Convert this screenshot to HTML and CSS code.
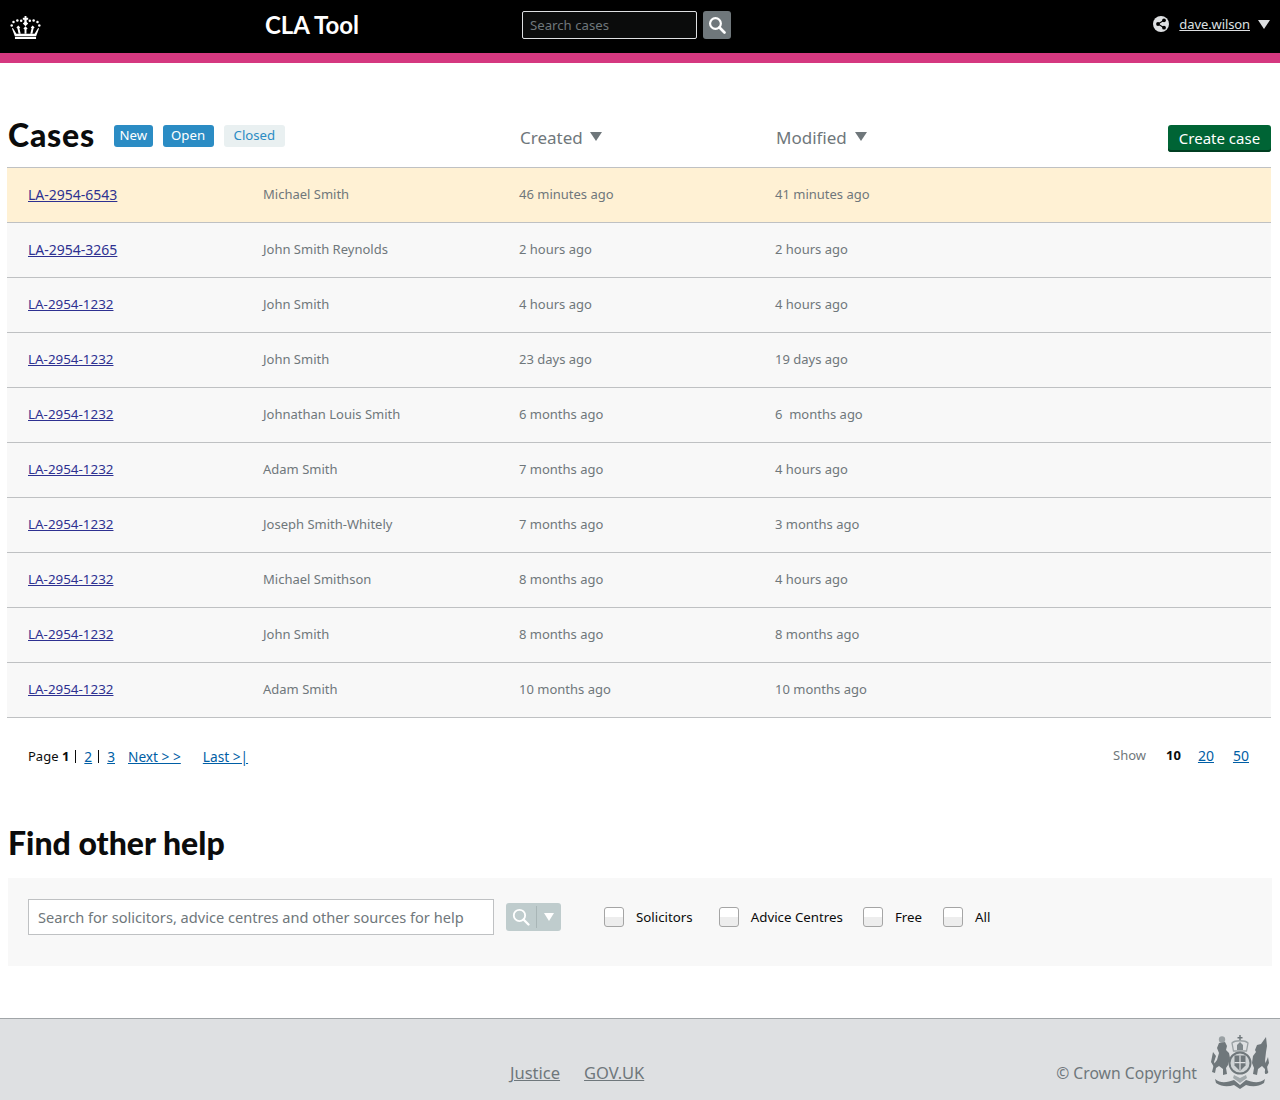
FILE: index.html
```html
<!DOCTYPE html>
<html lang="en">
<head>
<meta charset="utf-8">
<title>CLA Tool</title>
<link rel="stylesheet" href="styles.css">
</head>
<body>
<header class="topbar">
  <svg class="crown" viewBox="0 0 32 24" width="31" height="23" aria-hidden="true"><g fill="#fff"><circle cx="1.600" cy="10" r="1.300"/><circle cx="3.500" cy="6.200" r="1.300"/><circle cx="7.500" cy="4.800" r="1.300"/><circle cx="11.500" cy="5" r="1.300"/><circle cx="20.500" cy="5" r="1.300"/><circle cx="24.500" cy="4.800" r="1.300"/><circle cx="28.500" cy="6.200" r="1.300"/><circle cx="30.400" cy="10" r="1.300"/><path d="M15 0h2v1.800h1.800v2.200H17.200v2.300l1.600 1.500L16 10.600l-2.800-2.800 1.600-1.500V4H13.200V1.800H15z"/><path d="M16 10.800l2.200 2.200-1.200 1v4.500h-2V14l-1.200-1zM8.500 10l2 2-.9.8 1.400 5.700H8.800L7.600 13l-1.100-1zM23.500 10l2 2-1.100 1-1.200 5.500H21l1.400-5.700-.9-.8z"/><path d="M2.800 12.500l3.700 6h19l3.700-6 .9.500-3 8H4.900l-3-8z"/><rect x="5" y="21.800" width="22" height="2.200"/></g></svg>
  <div class="brand">CLA Tool</div>
  <form class="search">
    <input class="search-input" type="text" placeholder="Search cases">
    <button class="search-btn" type="button" aria-label="Search"><svg viewBox="0 0 20 20" width="18" height="18"><circle cx="8.300" cy="8.300" r="6" fill="none" stroke="#fff" stroke-width="2.400"/><path d="M12.800 12.800l5.500 5.500" stroke="#fff" stroke-width="3" stroke-linecap="round"/></svg></button>
  </form>
  <div class="user">
    <svg class="share" viewBox="0 0 16 16" width="16" height="16" aria-hidden="true"><circle cx="8" cy="8" r="8" fill="#dee0e2"/><g fill="#000"><circle cx="11" cy="4.300" r="1.900"/><circle cx="5" cy="8" r="1.900"/><circle cx="11" cy="11.700" r="1.900"/></g><path d="M11 4.300L5 8l6 3.700" stroke="#000" stroke-width="1.100" fill="none"/></svg>
    <a class="user-name" href="#">dave.wilson</a>
    <span class="caret caret-light"></span>
  </div>
</header>
<div class="stripe"></div>

<main>
  <div class="cases-head">
    <div class="cases-title">
      <h1>Cases</h1>
      <div class="tabs">
        <a class="tab tab-on tab-new" href="#">New</a>
        <a class="tab tab-on tab-open" href="#">Open</a>
        <a class="tab tab-off" href="#">Closed</a>
      </div>
    </div>
    <div class="sort sort-created">Created<span class="caret caret-sort"></span></div>
    <div class="sort sort-modified">Modified<span class="caret caret-sort caret-sort-wide"></span></div>
    <a class="create" href="#">Create case</a>
  </div>

  <div class="cases">
    <div class="row row-hl"><a class="id-wide" href="#">LA-2954-6543</a><span>Michael Smith</span><span>46 minutes ago</span><span>41 minutes ago</span></div>
    <div class="row"><a class="id-wide" href="#">LA-2954-3265</a><span>John Smith Reynolds</span><span>2 hours ago</span><span>2 hours ago</span></div>
    <div class="row"><a href="#">LA-2954-1232</a><span>John Smith</span><span>4 hours ago</span><span>4 hours ago</span></div>
    <div class="row"><a href="#">LA-2954-1232</a><span>John Smith</span><span>23 days ago</span><span>19 days ago</span></div>
    <div class="row"><a href="#">LA-2954-1232</a><span>Johnathan Louis Smith</span><span>6 months ago</span><span>6&nbsp; months ago</span></div>
    <div class="row"><a href="#">LA-2954-1232</a><span>Adam Smith</span><span>7 months ago</span><span>4 hours ago</span></div>
    <div class="row"><a href="#">LA-2954-1232</a><span>Joseph Smith-Whitely</span><span>7 months ago</span><span>3 months ago</span></div>
    <div class="row"><a href="#">LA-2954-1232</a><span>Michael Smithson</span><span>8 months ago</span><span>4 hours ago</span></div>
    <div class="row"><a href="#">LA-2954-1232</a><span>John Smith</span><span>8 months ago</span><span>8 months ago</span></div>
    <div class="row"><a href="#">LA-2954-1232</a><span>Adam Smith</span><span>10 months ago</span><span>10 months ago</span></div>
  </div>

  <div class="pager">
    <div class="pages">
      <span>Page <b>1</b></span><i class="sep"></i><a href="#">2</a><i class="sep"></i><a href="#">3</a>
      <a class="next" href="#">Next &gt; &gt;</a>
      <a class="last" href="#">Last &gt;|</a>
    </div>
    <div class="show">
      <span class="show-label">Show</span><b>10</b><a href="#">20</a><a href="#">50</a>
    </div>
  </div>

  <h2>Find other help</h2>
  <div class="help">
    <input class="help-input" type="text" placeholder="Search for solicitors, advice centres and other sources for help">
    <button class="help-btn" type="button" aria-label="Search">
      <svg viewBox="0 0 20 20" width="18" height="18"><circle cx="8.300" cy="8.300" r="6.300" fill="none" stroke="#fff" stroke-width="2"/><path d="M12.800 12.800l5.500 5.500" stroke="#fff" stroke-width="2.600" stroke-linecap="round"/></svg>
      <i class="help-div"></i>
      <span class="caret caret-help"></span>
    </button>
    <div class="filters">
      <label class="check check-a"><span class="box"></span>Solicitors</label>
      <label class="check check-b"><span class="box"></span>Advice Centres</label>
      <label class="check check-c"><span class="box"></span>Free</label>
      <label class="check"><span class="box"></span>All</label>
    </div>
  </div>
</main>

<footer class="foot">
  <div class="foot-links"><a href="#">Justice</a><a href="#">GOV.UK</a></div>
  <div class="foot-copy">
    <span>© Crown Copyright</span>
    <svg class="crest" viewBox="0 0 60 54" width="60" height="54" aria-hidden="true">
      <g fill="#6f777b">
        <path d="M29.300 0h1.400v2h1.800v1.400h-1.800v2h-1.400v-2h-1.800V2h1.800z"/>
        <path d="M22 8c3-3 13-3 16 0l-1.500 8h-13z" fill="none" stroke="#9aa1a4" stroke-width="1.300"/>
        <path d="M27 10l3-3 3 3v5h-6z" fill="#7f878b"/>
        <circle cx="30" cy="28" r="10.500" fill="#cfd3d5" stroke="#6f777b" stroke-width="2"/>
        <path d="M24.500 20.500h11v10l-5.500 5.500-5.500-5.500z"/>
        <path d="M29.400 20.500h1.200v15h-1.200zM24.500 27h11v1.200h-11z" fill="#dee0e2"/>
        <circle cx="12" cy="4.500" r="3.200" fill="#9aa1a4"/>
        <path d="M9 8l6-1 2 4-1 4 3 3 1 5-2 7-2 3 1 6-4 1 0-6-4-3-3 2-1 5-3-1 2-8 3-4 2-7-2-5z"/>
        <path d="M56 2l-5 7-4 1-2 5 1 2-3 4-1 7 2 5-1 6 4 1 1-6 4-3 3 3 0 5 3-1-1-7-2-5 1-9 1-6z"/>
        <path d="M3 17l3 4-2 6 2 4-2 1-3-5zM58 22l1 6-3 6-1-2 1-5z"/>
        <path d="M5 44c6 5 13 3 19 1l6 5 6-5c6 2 13 4 19-1l-1 4c-6 4-12 4-18 2l-6 4-6-4c-6 2-12 2-18-2z"/>
        <path d="M24 40l6 3 6-3 1 3-7 5-7-5z" fill="#a3aaad"/>
      </g>
      <circle cx="56.500" cy="37" r="1.300" fill="none" stroke="#6f777b"/>
    </svg>
  </div>
</footer>
</body>
</html>
```

FILE: styles.css
```css
* { box-sizing: border-box; }
html, body { margin: 0; padding: 0; }
body {
  font-family: "Noto Sans", "Open Sans", Arial, sans-serif;
  color: #0b0c0c;
  background: #fff;
  height: 1100px;
  overflow: hidden;
  display: flex;
  flex-direction: column;
}
a { color: inherit; }

.topbar {
  height: 53px;
  background: #000;
  display: flex;
  align-items: center;
  padding: 0 10px;
  flex: none;
}
.crown { flex: none; margin-top: 1px; }
.brand {
  font-family: Lato, "Noto Sans", sans-serif;
  font-weight: 700;
  font-size: 24px;
  line-height: 28px;
  color: #fff;
  margin: -4px 0 0 224px;
  width: 257px;
  letter-spacing: -0.05px;
}
.search { display: flex; align-items: center; gap: 6px; margin-top: -3px; }
.search-input {
  width: 175px;
  height: 28px;
  background: #0b0c0c;
  border: 1px solid #dee0e2;
  border-radius: 2px;
  padding: 0 7px;
  font: 13.200px "Noto Sans", sans-serif;
  color: #dee0e2;
}
.search-input::placeholder { color: #6f777b; opacity: 1; }
.search-btn {
  width: 28px;
  height: 28px;
  background: #6f777b;
  border: 0;
  border-radius: 3px;
  padding: 0;
  display: flex;
  align-items: center;
  justify-content: center;
}
.user {
  margin-left: auto;
  display: flex;
  align-items: center;
  color: #dee0e2;
  font-size: 13px;
  margin-top: -5px;
}
.share { margin-right: 10px; }
.user-name { color: #dee0e2; margin-right: 8px; letter-spacing: -0.1px; }
.caret { display: inline-block; width: 0; height: 0; border-style: solid; border-color: transparent; border-bottom-width: 0; }
.caret-light { border-width: 9px 6px 0; border-top-color: #dee0e2; }
.caret-sort { border-width: 9px 6px 0; border-top-color: #6f777b; margin-left: 7px; vertical-align: 3px; }
.caret-sort-wide { margin-left: 8px; }
.caret-help { border-width: 8px 5.500px 0; border-top-color: #fff; }

.stripe { height: 10px; background: #d53880; flex: none; }

main { flex: 1; display: flex; flex-direction: column; }

.cases-head {
  height: 104px;
  padding: 62px 9px 0 8px;
  display: grid;
  grid-template-columns: 512px 256px 1fr auto;
  align-items: start;
}
.cases-title { display: flex; align-items: flex-start; }
h1 {
  font-family: Lato, "Noto Sans", sans-serif;
  font-weight: 900;
  font-size: 32px;
  line-height: 20px;
  letter-spacing: 0.8px;
  width: 87px;
  margin: 0;
}
.tabs { display: flex; margin-left: 19px; gap: 10px; }
.tab {
  height: 22px;
  line-height: 21px;
  padding: 0 8.500px;
  border-radius: 3px;
  font-size: 13.200px;
  text-decoration: none;
}
.tab-new { padding: 0 5.500px; }
.tab-off { padding: 0 10px; }
.tab-on { background: #2b8cc4; color: #fff; }
.tab-off { background: #e9f0f1; color: #2b8cc4; }
.sort { font-size: 17px; color: #6f777b; line-height: 26px; white-space: nowrap; }
.create {
  background: #006435;
  color: #fff;
  font-size: 15px;
  line-height: 26px;
  height: 27px;
  width: 103px;
  text-align: center;
  text-decoration: none;
  border-radius: 3px;
  box-shadow: inset 0 -2px 0 #003e21;
}

.cases {
  margin: 0 9px 0 7px;
  border-top: 1px solid #bfc1c3;
}
.row {
  height: 55px;
  display: grid;
  grid-template-columns: 235px 256px 256px 1fr;
  align-items: center;
  padding: 0 0 2px 21px;
  background: #f8f8f8;
  border-bottom: 1px solid #bfc1c3;
  font-size: 13px;
  color: #6f777b;
}
.row a { color: #2e3191; font-size: 13.400px; }
.row a.id-wide { font-size: 14px; }
.row-hl { background: #fff1d4; }

.pager {
  display: flex;
  justify-content: space-between;
  padding: 28px 31px 0 28px;
  height: 93px;
  font-size: 13px;
}
.pages { display: flex; align-items: center; height: 20px; color: #0b0c0c; }
.pages a { color: #005ea5; font-size: 13.700px; }
.sep { width: 1px; height: 13px; background: #0b0c0c; margin: 0 8px 0 6px; }
.next { margin-left: 13px; }
.last { margin-left: 22px; }
.show { display: flex; align-items: center; height: 18px; gap: 17px; color: #6f777b; }
.show a { color: #005ea5; font-size: 14px; }
.show a + a { margin-left: 2px; }
.show b { color: #0b0c0c; margin-left: 3px; }

h2 {
  font-family: Lato, "Noto Sans", sans-serif;
  font-weight: 900;
  font-size: 32px;
  line-height: 36px;
  margin: 0 0 0 8px;
  height: 67px;
  padding-top: 14px;
}
.help {
  margin: 0 8px;
  height: 88px;
  background: #f8f8f8;
  display: flex;
  align-items: center;
  padding: 0 20px 10px;
}
.help-input {
  width: 466px;
  height: 36px;
  border: 1px solid #bfc1c3;
  background: #fff;
  padding: 0 9px;
  font: 14.600px "Noto Sans", sans-serif;
}
.help-input::placeholder { color: #6f777b; opacity: 1; }
.help-btn {
  margin-left: 12px;
  width: 55px;
  height: 28px;
  background: #bfcccd;
  border: 0;
  border-radius: 3px;
  display: flex;
  align-items: center;
  padding: 0 0 0 6px;
}
.help-div { width: 1px; height: 22px; background: #a9b6b7; margin: 0 7px 0 6px; }
.filters { display: flex; margin-left: 43px; font-size: 13.300px; color: #0b0c0c; }
.check { display: flex; align-items: center; gap: 12px; margin-right: 26px; }
.check-b { margin-right: 20px; }
.check-c { margin-right: 21px; }
.box {
  width: 20px;
  height: 20px;
  border: 1px solid #a5a5a5;
  border-radius: 3px;
  background: linear-gradient(#fff 50%, #ededed 50%);
}

.foot {
  height: 82px;
  flex: none;
  background: #dee0e2;
  border-top: 1px solid #a1a5a8;
  display: flex;
  justify-content: space-between;
  color: #6f777b;
  font-size: 16.500px;
}
.foot-links { display: flex; gap: 24px; margin-left: 510px; padding-top: 43px; line-height: 22px; }
.foot-links a { color: #6f777b; }
.foot-copy { display: flex; align-items: flex-start; gap: 13px; padding-right: 10px; font-size: 15.700px; }
.foot-copy span { padding-top: 43px; line-height: 22px; }
.crest { margin-top: 16px; }
```
